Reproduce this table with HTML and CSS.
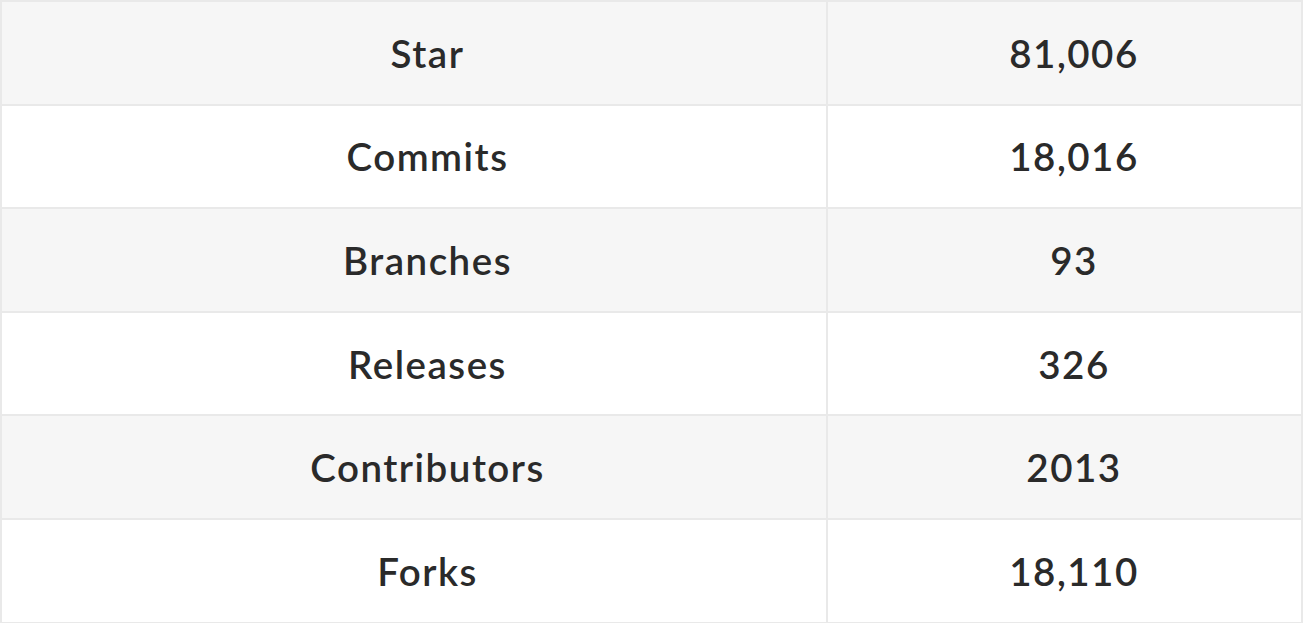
FILE: index.html
```html
<!DOCTYPE html>
<html lang="en">
<head>
<meta charset="utf-8">
<title>Repository stats</title>
<link rel="stylesheet" href="styles.css">
</head>
<body>
<table class="stats">
  <tbody>
    <tr><td class="label">Star</td><td class="value">81,006</td></tr>
    <tr><td class="label">Commits</td><td class="value">18,016</td></tr>
    <tr><td class="label">Branches</td><td class="value">93</td></tr>
    <tr><td class="label">Releases</td><td class="value">326</td></tr>
    <tr><td class="label">Contributors</td><td class="value">2013</td></tr>
    <tr><td class="label">Forks</td><td class="value">18,110</td></tr>
  </tbody>
</table>
</body>
</html>
```
FILE: styles.css
```css
html, body {
  margin: 0;
  padding: 0;
  background: #ffffff;
}

.stats {
  width: 1303px;
  border-collapse: collapse;
  font-family: "Lato", "Liberation Sans", sans-serif;
  font-weight: 600;
  font-size: 38.5px;
  letter-spacing: 1.5px;
  color: #2a2a2a;
}

.stats tr {
  height: 103.6px;
}

.stats tr:nth-child(odd) {
  background: #f6f6f6;
}

.stats td {
  border: 2px solid #e9e9e9;
  text-align: center;
  vertical-align: middle;
  padding: 0;
}

.stats .label {
  width: 797px;
  padding-left: 27px;
}

.stats .value {
  padding-left: 19px;
}
```
